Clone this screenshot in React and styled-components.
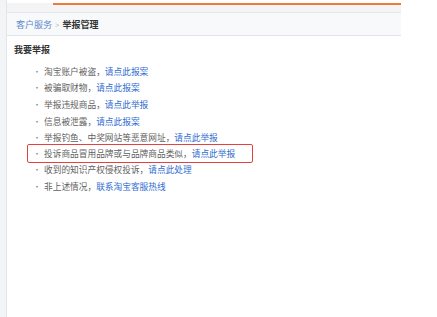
import React from 'react';
import styled, { createGlobalStyle } from 'styled-components';

const GlobalStyle = createGlobalStyle`
  html, body {
    margin: 0;
    padding: 0;
    background: #fff;
  }
  body {
    font-family: "Noto Sans CJK SC", "Liberation Sans", sans-serif;
  }
`;

const items = [
  { text: '淘宝账户被盗，', link: '请点此报案' },
  { text: '被骗取财物，', link: '请点此报案' },
  { text: '举报违规商品，', link: '请点此举报' },
  { text: '信息被泄露，', link: '请点此报案' },
  { text: '举报钓鱼、中奖网站等恶意网址，', link: '请点此举报' },
  { text: '投诉商品冒用品牌或与品牌商品类似，', link: '请点此举报', marked: true },
  { text: '收到的知识产权侵权投诉，', link: '请点此处理' },
  { text: '非上述情况，', link: '联系淘宝客服热线' },
];

export default function App() {
  return (
    <>
      <GlobalStyle />
      <Page>
        <SideStrip />
        <Panel>
          <TopBand>
            <Accent />
          </TopBand>
          <Crumbs>
            <CrumbLink>客户服务</CrumbLink>
            <CrumbSep>&gt;</CrumbSep>
            <CrumbCurrent>举报管理</CrumbCurrent>
          </Crumbs>
          <Body>
            <Heading>我要举报</Heading>
            <List>
              {items.map((it) => (
                <Item key={it.text} $marked={it.marked}>
                  <Dot>•</Dot>
                  <span>{it.text}</span>
                  <Link>{it.link}</Link>
                </Item>
              ))}
            </List>
          </Body>
        </Panel>
      </Page>
    </>
  );
}

const Page = styled.div`
  display: flex;
  height: 317px;
  width: 437px;
`;

// left light strip
const SideStrip = styled.div`
  width: 6px;
  background: #f3f4f5;
  border-right: 1px solid #e3e5e8;
`;

const Panel = styled.div`
  width: 394px;
  display: flex;
  flex-direction: column;
`;

const TopBand = styled.div`
  margin-top: 3px;
  height: 9px;
  background: #f4f4f4;
  border-bottom: 1px solid #e4e6e9;
`;

const Accent = styled.div`
  margin-left: 46px;
  height: 2px;
  background: #ef7a3e;
`;

const Crumbs = styled.div`
  height: 21px;
  display: flex;
  align-items: center;
  padding-left: 9px;
  padding-top: 1px;
  background: #f8f9fb;
  border-bottom: 1px solid #e2e4e8;
  font-size: 9px;
`;

const CrumbLink = styled.span`
  color: #5d8ad0;
`;

const CrumbSep = styled.span`
  color: #b8bcc2;
  margin: 0 3px;
  font-size: 8px;
`;

const CrumbCurrent = styled.span`
  color: #333;
  font-weight: 700;
`;

const Body = styled.div`
  padding: 8px 0 0 7px;
`;

const Heading = styled.div`
  font-size: 9px;
  font-weight: 700;
  color: #333;
  line-height: 12px;
`;

const List = styled.ul`
  list-style: none;
  margin: 7px 0 0;
  padding: 0;
`;

const Item = styled.li`
  display: flex;
  align-items: center;
  height: 16.6px;
  font-size: 8.7px;
  color: #5f5f5f;
  width: fit-content;
  margin: ${(p) => (p.$marked ? '-1.6px 0 -1.6px 13px' : '0 0 0 19px')};
  padding: ${(p) => (p.$marked ? '0 17px 0 5px' : '0')};
  border: ${(p) => (p.$marked ? '1.6px solid #e8403c' : 'none')};
  border-radius: 2px;
`;

const Dot = styled.span`
  width: 11px;
  color: #888;
  font-size: 8px;
`;

const Link = styled.span`
  color: #2f6ccf;
`;
